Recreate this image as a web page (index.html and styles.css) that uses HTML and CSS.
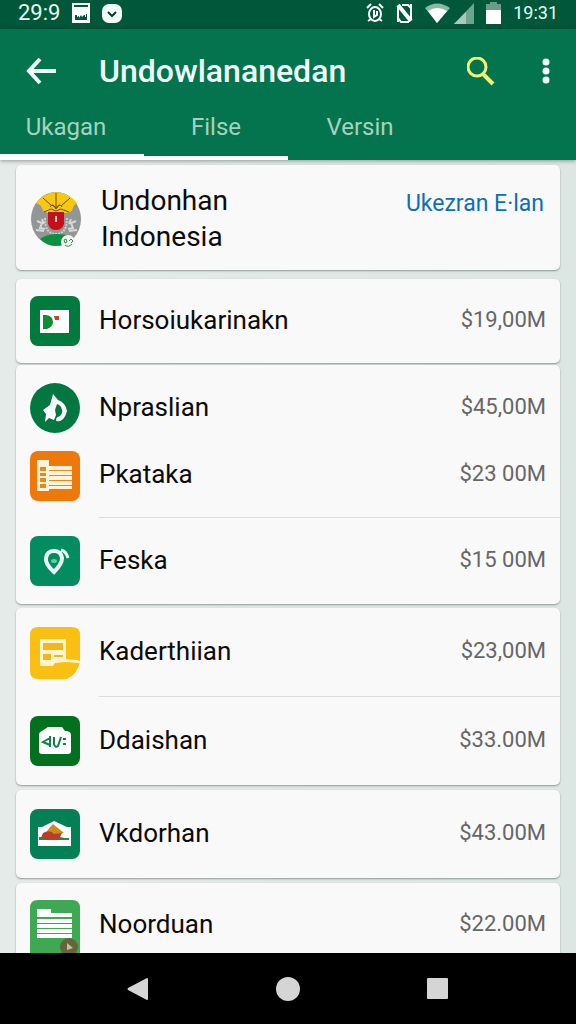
FILE: index.html
```html
<!DOCTYPE html>
<html lang="id">
<head>
	<meta charset="utf-8">
	<meta name="viewport" content="width=device-width, initial-scale=1">
	<title>Undowlananedan</title>
	<link rel="stylesheet" href="styles.css">
</head>
<body>
	<div class="status">
		<span class="status-time">29:9</span>
		<svg width="18" height="20" viewBox="0 0 18 20"><path fill="#fff" d="M0 0h18v20H0z"/><path fill="#00573a" d="M2 2h14v2H2zM3 12h2v2l2-1v2l2-3 1 2 2-2h1v2h1v-3h1v6H3z"/></svg>
		<svg width="20" height="19" viewBox="0 0 20 19"><rect width="20" height="19" rx="7" fill="#f2fffa"/><path d="M6 8l4 4 4-4" fill="none" stroke="#00402a" stroke-width="2"/></svg>
		<span class="space"></span>
		<svg width="18" height="20" viewBox="0 0 18 20" fill="none" stroke="#fff" stroke-width="2"><ellipse cx="9" cy="11" rx="6" ry="7"/><path d="M1 5l4-4M17 5l-4-4M2 18l3-2M16 18l-3-2M8 7v7l3-2V8"/></svg>
		<svg width="17" height="20" viewBox="0 0 17 20" fill="none" stroke="#fff" stroke-width="2"><path d="M2 19V3M15 17V1M6 2h6l3 3M2 15l3 4h8"/><path d="M2 2l13 16" stroke-width="4"/></svg>
		<svg class="wifi" width="25" height="20" viewBox="0 0 25 20"><path fill="#8ab9a4" d="M0 5Q12-4 25 5L12 20z"/><path fill="#fff" d="M3 8q9-6 19 0L12 20z"/></svg>
		<svg width="20" height="21" viewBox="0 0 20 21"><path fill="#6fa58f" d="M20 0v21H0z"/><path fill="#a8c9bc" d="M12 9v12H0z"/></svg>
		<svg width="15" height="22" viewBox="0 0 15 22"><path fill="#6b9c87" d="M4 0h7v2h4v7H0V2h4z"/><path fill="#fff" d="M0 8h15v14H0z"/></svg>
		<span class="status-clock">19:31</span>
	</div>

	<header class="header">
		<div class="appbar">
			<button class="icon-btn back" type="button" aria-label="Kembali">
				<svg width="30" height="28" viewBox="0 0 30 28" fill="none" stroke="#f0fff9" stroke-width="4"><path d="M14 2L3 14l11 12M3 14h27"/></svg>
			</button>
			<h1 class="title">Undowlananedan</h1>
			<button class="icon-btn search" type="button" aria-label="Cari">
				<svg width="28" height="29" viewBox="0 0 28 29" fill="none" stroke="#eff274"><circle cx="10" cy="10" r="9" stroke-width="3"/><path d="M16 17l10 10" stroke-width="4"/></svg>
			</button>
			<button class="icon-btn more" type="button" aria-label="Menu">
				<svg width="8" height="26" viewBox="0 0 8 26" fill="#f0fff9"><circle cx="4" cy="4" r="3.5"/><circle cx="4" cy="13" r="3.5"/><circle cx="4" cy="22" r="3.5"/></svg>
			</button>
		</div>
		<nav class="tabs">
			<a href="#" class="tab tab-active">Ukagan</a>
			<a href="#" class="tab tab-next">Filse</a>
			<a href="#" class="tab">Versin</a>
		</nav>
	</header>

	<main class="list">
		<section class="card card-top">
			<svg class="avatar" width="51" height="55" viewBox="0 0 51 55">
				<ellipse cx="25" cy="27" rx="25" ry="27" fill="#929697"/>
				<path fill="#f8c80e" d="M5 11Q13 1 25 0q13 1 21 11-4 2-5 8l-5 2H16l-4-2Q11 13 5 11z"/>
				<path fill="none" stroke="#6d4c12" d="M25 1v15M12 6l9 8M39 6l-9 8M19 15q3-5 6 2 3-7 6-2M21 13l4 3 4-3M13 20l7-3 5 2 5-2 8 3"/>
				<path fill="none" stroke="#d6d8da" stroke-width="2" d="M6 29l5 2-2 5 5 1M45 29l-5 2 2 5-5 1M5 38l8 1M46 38l-8 1M11 27l2 5M40 27l-2 5"/>
				<path fill="none" stroke="#d3cdca" stroke-width="2" stroke-dasharray="2 1" d="M14 26q0 16 11 16t11-16"/>
				<path fill="#c50f1a" d="M17 20h16v12q-2 6-8 6t-8-6z"/>
				<path fill="#f5d3b7" d="M24 24h2v6h-2z"/>
				<path fill="#0c9040" d="M9 47q7-5 17-5t15 4q-5 8-16 8-9 0-16-7z"/>
				<circle cx="37" cy="50" r="7" fill="#eef3ef"/>
				<path fill="none" stroke="#42845d" stroke-width="1" d="M33 48l2-1 1 3-2 1zM38 49l2-2 2 2-2 2M34 53q3 3 7-1"/>
			</svg>
			<h2 class="name-top">Undonhan<br>Indonesia</h2>
			<a class="link" href="#">Ukezran E·lan</a>
		</section>

		<section class="card card-single">
			<div class="row row-short">
				<svg class="icon" viewBox="0 0 50 50"><rect width="50" height="50" rx="8" fill="#017a3e"/><path fill="#fff" d="M10 14h29v23H10z"/><path fill="#128b38" d="M13 19h3q7 1 7 7 0 5-6 7h-4z"/><path fill="#b6492f" d="M24 20h5v4h-4z"/></svg>
				<span class="name">Horsoiukarinakn</span>
				<span class="amount">$19,00M</span>
			</div>
		</section>

		<section class="card card-group">
			<div class="row">
				<svg class="icon" viewBox="0 0 50 50"><circle cx="25" cy="25" r="25" fill="#02773f"/><path fill="#fff" d="M23 11l5 6q8 3 9 11-2 8-7 10-4 1-4-1 0-3 4-4 3-3 2-6-1-5-5-6l-2 6 1 5-2 5-5-2-4 4 1-8-3-4 7-5z"/></svg>
				<span class="name">Npraslian</span>
				<span class="amount">$45,00M</span>
			</div>
			<div class="row row-joined">
				<svg class="icon" viewBox="0 0 50 50"><rect width="50" height="50" rx="8" fill="#ee790a"/><path fill="#fff3da" d="M7 9h12v6h23v23H19v2H7z"/><path fill="#e8891f" d="M10 16h6v4h-6zM10 22h6v3h-6zM10 27h6v4h-6zM10 33h6v4h-6zM19 19h23v1H19zM19 24h23v1H19zM19 29h23v1H19zM19 34h23v1H19z"/></svg>
				<span class="name">Pkataka</span>
				<span class="amount">$23 00M</span>
			</div>
			<hr class="divider">
			<div class="row">
				<svg class="icon" viewBox="0 0 50 50"><rect width="50" height="50" rx="8" fill="#048c61"/><path fill="none" stroke="#eafff5" stroke-width="4" d="M24 36q-9-8-8-14 1-7 8-7t8 7q0 6-8 14z"/><ellipse cx="24" cy="25" rx="3" ry="2" fill="#5fd0a4"/><path fill="none" stroke="#eafff5" stroke-width="3" d="M31 14q5 1 7 8"/></svg>
				<span class="name">Feska</span>
				<span class="amount">$15 00M</span>
			</div>
		</section>

		<section class="card">
			<div class="row row-tall">
				<svg class="icon" viewBox="0 0 50 50"><path fill="#f9bf13" d="M8 0h34q8 0 8 8v26q-2 13-13 18H8q-8 0-8-8V8q0-8 8-8z"/><path fill="#fff6cf" d="M10 12h26v20l11 1 5 2-3 1-13-1-11 1-2 3H10z"/><path fill="#f3b71c" d="M13 16h20v7H13zM13 27h8v6h-8zM24 28h9v2h-9z"/></svg>
				<span class="name">Kaderthiian</span>
				<span class="amount">$23,00M</span>
			</div>
			<hr class="divider">
			<div class="row row-tall">
				<svg class="icon" viewBox="0 0 50 50"><rect width="50" height="50" rx="8" fill="#03701f"/><path fill="#fff" d="M18 11h14l3 4q6 0 6 4v16q0 3-3 3H12q-3 0-3-3V19q0-3 3-4z"/><path fill="none" stroke="#128048" stroke-width="2" d="M20 22l-7 4 7 3M20 20v11M24 21v7q1 4 4 2l3-9M33 23h3M33 28h3"/></svg>
				<span class="name">Ddaishan</span>
				<span class="amount">$33.00M</span>
			</div>
		</section>

		<section class="card">
			<div class="row row-tall">
				<svg class="icon" viewBox="0 0 50 50"><rect width="50" height="50" rx="8" fill="#038055"/><path fill="#fff" d="M8 18h4l12-6 13 6h4v19H8z"/><path fill="#d18b1c" d="M23 15l11 9-20 4q2-6 9-13z"/><path fill="#b83d2c" d="M13 24q7-4 11 1l8-1-2 4 9 2v1H10z"/><path fill="#398039" d="M9 28h6v3H9zM27 29h12v2H27z"/></svg>
				<span class="name">Vkdorhan</span>
				<span class="amount">$43.00M</span>
			</div>
		</section>

		<section class="card">
			<div class="row row-short">
				<svg class="icon" viewBox="0 0 50 50"><path fill="#3ea953" d="M8 0h34q8 0 8 8v50H0V8q0-8 8-8z"/><path fill="#fff" d="M7 9h14v4h21v4H7zM7 19h35v4H7zM7 24h35v4H7zM7 29h35v4H7zM7 34h35v4H7z"/><circle cx="39" cy="47" r="9" fill="#65643b"/><path fill="#c7bf97" d="M37 43l6 5-6 2z"/></svg>
				<span class="name">Noorduan</span>
				<span class="amount">$22.00M</span>
			</div>
		</section>
	</main>

	<footer class="navbar">
		<button class="nav-btn" type="button" aria-label="Kembali"><svg width="22" height="24" viewBox="0 0 22 24"><path fill="#d5d5d5" d="M1 11L20 1q1 0 1 1v20q0 1-1 1L1 13q-1-1 0-2z"/></svg></button>
		<button class="nav-btn" type="button" aria-label="Beranda"><svg width="26" height="26" viewBox="0 0 26 26"><circle cx="13" cy="13" r="12" fill="#d5d5d5"/></svg></button>
		<button class="nav-btn" type="button" aria-label="Terbaru"><svg width="22" height="22" viewBox="0 0 22 22"><rect width="21" height="21" rx="1" fill="#d5d5d5"/></svg></button>
	</footer>
</body>
</html>
```
FILE: styles.css
```css
*{box-sizing: border-box; margin: 0; padding: 0;}
body{
	display: flex;
	flex-direction: column;
	height: 100vh;
	overflow: hidden;
	font-family: Roboto, "Liberation Sans", sans-serif;
	background: #e0e8e5;
	color: #0b0b0b;
}
svg{
	display: block;
	flex: none;
}
button{
	border: 0;
	background: none;
	cursor: pointer;
}
a{
	text-decoration: none;
}

/* status bar */
.status{
	display: flex;
	flex: none;
	align-items: center;
	gap: 12px;
	height: 29px;
	padding: 0 18px 3px;
	background: #00573a;
	color: #e6fff5;
	line-height: 26px;
}
.status-time{
	font-size: 22px;
}
.status-clock{
	font-size: 18px;
}
.space{
	flex: 1;
}
.wifi{
	margin-right: -8px;
}

/* header */
.header{
	flex: none;
	padding-top: 10px;
	background: #03744d;
	box-shadow: 0 1px 4px rgba(0,0,0,.35);
	z-index: 1;
}
.appbar{
	display: flex;
	align-items: center;
	height: 64px;
	padding: 0 16px 0 26px;
}
.icon-btn{
	display: flex;
	align-items: center;
	justify-content: center;
	height: 48px;
}
.back{
	width: 30px;
}
.search{
	width: 48px;
}
.more{
	width: 28px;
	margin-left: 27px;
}
.title{
	flex: 1;
	padding-left: 43px;
	font-size: 32px;
	font-weight: 500;
	color: #f0fff9;
}
.tabs{
	display: flex;
}
.tab{
	flex: 0 0 25%;
	height: 57px;
	line-height: 48px;
	font-size: 24px;
	text-align: center;
	color: #a5d3bf;
}
.tab-active{
	padding-right: 12px;
	border-bottom: 6px solid #fff;
}
.tab-next{
	border-bottom: 4px solid #fff;
}

/* list */
.list{
	flex: 1;
	min-height: 0;
	overflow: hidden;
	padding: 5px 16px 0;
	background: linear-gradient(to right, #e5ebe9, #dce6e2);
}
.card{
	margin-bottom: 5px;
	border-radius: 5px;
	background: #f9f9f9;
	box-shadow: 0 1px 2px rgba(0,0,0,.35);
}
.card-top{
	display: flex;
	align-items: center;
	margin-bottom: 9px;
	padding: 18px 16px 15px 15px;
}
.card-single{
	margin-bottom: 2px;
}
.card-group{
	margin-bottom: 4px;
}
.name-top{
	flex: 1;
	padding-left: 19px;
	font-size: 28px;
	font-weight: 400;
	line-height: 36px;
}
.link{
	align-self: flex-start;
	font-size: 23px;
	line-height: 42px;
	color: #0d6fb5;
}
.row{
	display: flex;
	align-items: center;
	height: 86px;
	padding: 0 14px;
}
.row-short{
	height: 84px;
}
.row-tall{
	height: 88px;
}
.row-joined{
	align-items: flex-start;
	height: 66px;
}
.icon{
	width: 50px;
	height: 50px;
	overflow: visible;
}
.name{
	flex: 1;
	padding: 0 0 2px 19px;
	font-size: 26px;
	line-height: 46px;
}
.amount{
	padding-bottom: 2px;
	font-size: 22px;
	line-height: 46px;
	color: #666;
}
.divider{
	height: 1px;
	margin-left: 83px;
	border: 0;
	background: #dcdede;
}

/* navigation bar */
.navbar{
	display: flex;
	flex: none;
	justify-content: center;
	height: 71px;
	background: #000;
	z-index: 1;
}
.nav-btn{
	display: flex;
	flex: 0 0 26%;
	align-items: center;
	justify-content: center;
}
```
